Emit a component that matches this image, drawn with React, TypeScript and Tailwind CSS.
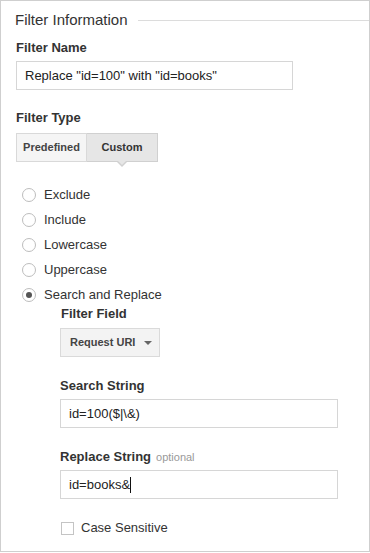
const RADIOS = ['Exclude', 'Include', 'Lowercase', 'Uppercase', 'Search and Replace'];

const Label = ({ children }: { children: React.ReactNode }) => (
  <div className="h-[16px] text-[13px] leading-[16px] font-bold text-[#333]">{children}</div>
);

const TextBox = ({ value, width, caret }: { value: string; width: string; caret?: boolean }) => (
  <div className={`${width} h-[29px] mt-[5px] border border-[#d6d6d6] bg-white px-[8px] flex items-center text-[13px] text-[#222]`}>
    <span>{value}</span>
    {caret && <span className="w-px h-[16px] bg-[#111]" />}
  </div>
);

export default function App() {
  return (
    <div
      className="w-[370px] h-[552px] border border-[#cfcfcf] bg-white pl-[14px] text-[#333]"
      style={{ fontFamily: '"Liberation Sans", Arial, sans-serif' }}
    >
      {/* — Header — */}
      <div className="mt-[9px] h-[20px] flex items-center">
        <span className="text-[15px] leading-[20px] text-[#333]">Filter Information</span>
        <div className="flex-1 h-px bg-[#dcdcdc] ml-[10px]" />
      </div>

      <div className="pl-px">
        {/* Filter name */}
        <div className="mt-[10px]">
          <Label>Filter Name</Label>
          <TextBox value={'Replace "id=100" with "id=books"'} width="w-[277px]" />
        </div>

        {/* Filter type toggle */}
        <div className="mt-[20px]">
          <Label>Filter Type</Label>
          <div className="mt-[7px] flex">
            <div className="w-[71px] h-[29px] border border-[#d9d9d9] bg-[#f5f5f5] flex items-center justify-center text-[11px] font-bold text-[#444]">
              Predefined
            </div>
            <div className="relative w-[71px] h-[29px] border border-l-0 border-[#d0d0d0] bg-[#e6e6e6] flex items-center justify-center text-[11px] font-bold text-[#333]">
              Custom
              <div className="absolute left-1/2 -translate-x-1/2 top-full w-0 h-0 border-x-[6px] border-x-transparent border-t-[6px] border-t-[#d0d0d0]" />
              <div className="absolute left-1/2 -translate-x-1/2 top-full -mt-px w-0 h-0 border-x-[5px] border-x-transparent border-t-[5px] border-t-[#e6e6e6]" />
            </div>
          </div>
        </div>

        {/* Radio list */}
        <div className="mt-[20px] flex flex-col">
          {RADIOS.map((r) => {
            const on = r === 'Search and Replace';
            return (
              <div key={r} className="h-[25px] flex items-center pl-[6px] gap-[8px]">
                <div className="w-[14px] h-[14px] rounded-full border border-[#bdbdbd] bg-white flex items-center justify-center">
                  {on && <div className="w-[6px] h-[6px] rounded-full bg-[#555]" />}
                </div>
                <span className="text-[13px] text-[#333]">{r}</span>
              </div>
            );
          })}
        </div>

        {/* Search and replace options */}
        <div className="pl-[44px]">
          <div className="h-[14px] text-[13px] leading-[14px] font-bold text-[#333] pl-px">Filter Field</div>
          <div className="mt-[7px] w-[100px] h-[29px] border border-[#dadada] bg-[#f3f3f3] flex items-center pl-[9px] pr-[7px]">
            <span className="text-[11px] font-bold text-[#444]">Request URI</span>
            <div className="ml-auto w-0 h-0 border-x-[4px] border-x-transparent border-t-[4px] border-t-[#666]" />
          </div>

          <div className="mt-[21px]">
            <Label>Search String</Label>
            <TextBox value={'id=100($|\\&)'} width="w-[278px]" />
          </div>

          <div className="mt-[21px]">
            <div className="h-[16px] leading-[16px] flex items-baseline gap-[5px]">
              <span className="text-[13px] font-bold text-[#333]">Replace String</span>
              <span className="text-[11px] text-[#999]">optional</span>
            </div>
            <TextBox value="id=books&" width="w-[278px]" caret />
          </div>

          <div className="mt-[22px] h-[14px] flex items-center gap-[7px] pl-px">
            <div className="w-[13px] h-[13px] border border-[#c4c4c4] bg-white" />
            <span className="text-[13px] text-[#333]">Case Sensitive</span>
          </div>
        </div>
      </div>
    </div>
  );
}
